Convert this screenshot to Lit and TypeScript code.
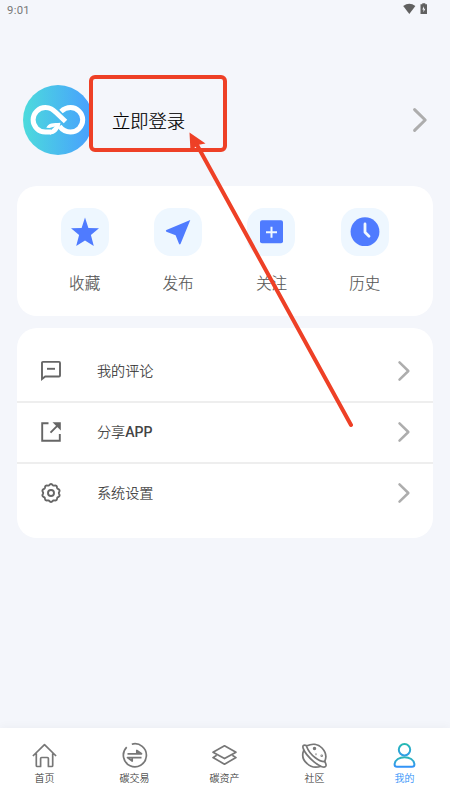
import { LitElement, html, css, svg } from "lit";
import { customElement } from "lit/decorators.js";

const chevron = html`<svg class="chev" viewBox="0 0 14 24"><path d="M1.600 1.600 12.200 12 1.600 22.400" fill="none" stroke="#adadad" stroke-width="3" stroke-linecap="round" stroke-linejoin="round"/></svg>`;

// Scalloped outline of the settings gear: ten soft lobes round a 20px box.
const gear = "M" + Array.from({ length: 120 }, (_, i) => {
  const a = (i / 120) * Math.PI * 2;
  const r = 8.400 + 0.550 * Math.cos(a * 10 + Math.PI);
  return `${(10 + r * Math.cos(a)).toFixed(2)} ${(10 + r * Math.sin(a)).toFixed(2)}`;
}).join("L") + "Z";

const quick = [
  { label: "收藏", icon: svg`<path d="M14 -.4 17.4 9.9 28 10.200 19.900 17 22.800 28 14 22.400 5.200 28 8.100 17 0 10.200 10.600 9.900Z"/>` },
  { label: "发布", icon: svg`<path d="M26.300 2.100 16.600 25.800Q15.800 27.300 15 25.800L11.600 17.200 2.400 13.700Q1.200 12.800 2.400 12Z"/>` },
  { label: "关注", icon: svg`<rect x="3" y="2.300" width="23" height="23" rx="2"/><path d="M14.500 8.800v11M9 14.300h11" stroke="#f0f8ff" stroke-width="2"/>` },
  { label: "历史", icon: svg`<circle cx="14" cy="13.700" r="14.400"/><path d="M14 6v8.300l4 4" fill="none" stroke="#f0f8ff" stroke-width="2.800" stroke-linecap="round" stroke-linejoin="round"/>` },
];

const rows = [
  { label: html`我的评论`, icon: svg`<path d="M1 18V1.900Q1 .9 2 .9H18Q19 .9 19 1.900V14.500Q19 15.500 18 15.500H4.200Z"/><path d="M6 7.800h8"/>` },
  { label: html`分享<b>APP</b>`, icon: svg`<path d="M7.500 1.200H1.200V18.800H18.800V12M9.500 10.700 16 4.200"/><path d="M11.500 .2H19.800V8.500Z" fill="#666" stroke="none"/>` },
  { label: html`系统设置`, icon: svg`<path d=${gear}/><circle cx="10" cy="10" r="3"/>` },
];

const tabs = [
  { label: "首页", icon: svg`<path d="M.9 13 12.500 1.700 24.100 13M4.300 10.500V22.500Q4.300 23.500 5.300 23.500H8.600V15.600Q8.600 14.500 9.700 14.500H15.300Q16.400 14.500 16.400 15.600V23.500H19.700Q20.700 23.500 20.700 22.500V10.500"/>` },
  { label: "碳交易", icon: svg`<path d="M9.800 1.200A11.500 11.500 0 1 1 4.700 4.200"/><path d="M5.500 10.800H19.500L14.800 7.500V10.800M19.500 14.600H5.500L10.200 18V14.600"/>` },
  { label: "碳资产", icon: svg`<path d="M12.500 2.800 24 9.200 12.500 15.600 1 9.200Z"/><path d="M4.700 12.200 1 14.600 12.500 21.200 24 14.600 20.300 12.200"/>` },
  { label: "社区", icon: svg`<path d="M5 2.700C10 .3 16 .7 20 5 24.500 9.800 25 14 22.500 19M1.800 7C-.2 12 .8 17 5 20.500 9 24.400 14 25 19 23.200"/><path d="M5 2.700C1 1.300 .3 3 1.300 5.600 3 10.500 7.500 15 12 18.800 17 23 22.500 25.500 23.800 23.200 24.700 21.500 23.700 20 22.500 18.200"/><path d="M4.400 3Q7 10 13 14.500 18 18.500 22.500 18.600"/><circle cx="12.500" cy="5.500" r=".9"/><circle cx="19.700" cy="12.700" r=".4"/><circle cx="14" cy="11.200" r=".2"/>` },
  { label: "我的", icon: svg`<defs><linearGradient id="me" gradientUnits="userSpaceOnUse" x1="0" y1="0" x2="0" y2="25"><stop offset="0" stop-color="#24bcae"/><stop offset=".48" stop-color="#309ce8"/><stop offset=".58" stop-color="#2cb5b8"/><stop offset="1" stop-color="#338fff"/></linearGradient></defs><g stroke="url(#me)" stroke-width="2"><circle cx="12.500" cy="6.800" r="5.700"/><path d="M2.600 21.500C3 11.700 22 11.700 22.400 21.500Q22.400 23.800 20 23.800H5Q2.600 23.800 2.600 21.500Z"/></g>` },
];

@customElement("app-root")
export class AppRoot extends LitElement {
  static styles = css`
    :host { display: block; }
    * { box-sizing: border-box; }
    svg { display: block; overflow: visible; flex: none; }
    .screen { position: relative; width: 450px; height: 800px; overflow: hidden; background: #f4f6fb; font-family: Roboto, "Noto Sans CJK SC", sans-serif; font-weight: 300; display: flex; flex-direction: column; }
    .status { height: 20px; padding: 0 22.500px 0 7px; display: flex; align-items: center; justify-content: space-between; color: #777; font-size: 11.300px; font-weight: 400; letter-spacing: .3px; }
    .status svg { width: 25px; height: 12px; margin-top: -2px; }
    .profile { height: 70px; margin-top: 65px; padding: 0 23px 0 22.500px; display: flex; align-items: center; }
    .avatar { width: 70px; height: 70px; }
    .login { margin: 3px 0 0 19.500px; flex: 1; font-size: 18.300px; color: #000; line-height: 28px; -webkit-text-stroke: .2px #000; }
    .profile .chev { width: 14px; height: 24px; }
    .card { margin: 0 17px; background: #fff; border-radius: 20px; }
    .quick { margin-top: 31px; height: 130px; padding: 22px 21px 0; display: grid; grid-template-columns: repeat(4, 93.400px); }
    .item { display: flex; flex-direction: column; align-items: center; color: #555; font-size: 15.600px; line-height: 24px; -webkit-text-stroke: .15px #555; }
    .tile { width: 48px; height: 48px; border-radius: 17px; background: #eef7ff; display: grid; place-items: center; margin-bottom: 16px; }
    .tile svg { width: 28px; height: 28px; fill: #4f7bff; }
    .list { margin-top: 11.500px; height: 210px; padding-top: 13.500px; }
    .row { height: 61px; padding: 0 23px 2px 24px; display: flex; align-items: center; border-bottom: 2px solid #eee; }
    .row:first-child { height: 62px; padding-top: 1px; }
    .row:last-child { border: 0; height: 60px; }
    .row > svg:first-child { width: 20px; height: 20px; fill: none; stroke: #666; stroke-width: 1.900; }
    .row span { flex: 1; margin: 0 0 0 36px; font-size: 14.100px; line-height: 20px; color: #333; -webkit-text-stroke: .15px #333; }
    .row b { font-weight: 500; color: #444; -webkit-text-stroke: 0; }
    .row .chev { width: 12px; height: 20px; }
    .tabs { margin-top: auto; height: 72px; padding: 15px 0 0; background: #fff; display: grid; grid-template-columns: repeat(5, 90px); box-shadow: 0 -2px 8px #00000008; }
    .tab { display: flex; flex-direction: column; align-items: center; gap: 2px; margin-left: -1px; font-size: 10px; line-height: 18px; color: #333; -webkit-text-stroke: .12px currentColor; }
    .tab svg { width: 25px; height: 25px; fill: none; stroke: #777; stroke-width: 1.700; stroke-linejoin: round; }
    .tab:last-child { color: #1989fa; }
    .marks { position: absolute; inset: 0; width: 450px; height: 800px; pointer-events: none; }
  `;

  render() {
    return html`<main class="screen">
      <header class="status"><span>9:01</span>
        <svg viewBox="0 0 25 12" fill="#606060"><path d="M.2 3Q6.300-1.500 12.400 3L6.300 11Z"/><path d="M19.300 1.200V.2h3v1H24V11H17.500V1.200Z"/><path d="M21 3.200 19.300 6.600h1.200v2.600L22.300 5.800H21Z" fill="#f4f6fb"/></svg>
      </header>
      <section class="profile">
        <svg class="avatar" viewBox="0 0 70 70"><defs><linearGradient id="av"><stop stop-color="#4cdbdc"/><stop offset="1" stop-color="#489eff"/></linearGradient></defs>
          <circle cx="35" cy="35" r="35" fill="url(#av)"/>
          <g fill="none" stroke="#fff" stroke-width="5"><path d="M28 47H22.300A12.200 12.200 0 0 1 22.300 22.600C27.500 22.600 29.500 24.300 33 27.500L42.500 36.500"/><path d="M38 26.500C41 23.800 43.500 22.600 47.500 22.600A12.200 12.200 0 0 1 47.500 47C42 47 39 44.500 36.500 41.200"/></g>
          <path d="M23.300 42.800C25.500 37.500 30 38.200 37.500 37.700C36.500 45 32 49.500 27 49.500V46L31.800 41.500 26.500 43Z" fill="#fff"/></svg>
        <span class="login">立即登录</span>${chevron}
      </section>
      <section class="card quick">${quick.map(q => html`<div class="item"><div class="tile"><svg viewBox="0 0 28 28">${q.icon}</svg></div><span>${q.label}</span></div>`)}</section>
      <section class="card list">${rows.map(r => html`<div class="row"><svg viewBox="0 0 20 20">${r.icon}</svg><span>${r.label}</span>${chevron}</div>`)}</section>
      <nav class="tabs">${tabs.map(t => html`<div class="tab"><svg viewBox="0 0 25 25">${t.icon}</svg><span>${t.label}</span></div>`)}</nav>
      <svg class="marks" viewBox="0 0 450 800"><rect x="91" y="77" width="134" height="73" rx="4" fill="none" stroke="#ee4026" stroke-width="4"/><path d="M351 425 197 145" stroke="#ee4026" stroke-width="4" stroke-linecap="round"/><path d="M189.500 132.500 205.500 143.500 197.500 145 190.500 151.500Z" fill="#ee4026"/></svg>
    </main>`;
  }
}
